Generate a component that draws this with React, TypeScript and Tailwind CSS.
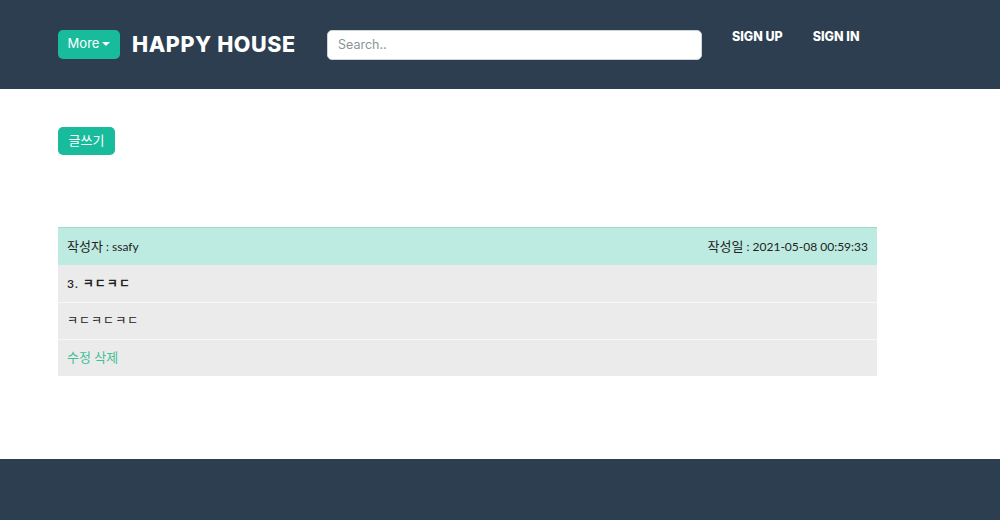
const KR = '"Lato", "Noto Sans CJK KR", sans-serif'
const HEAD = '"Inter", "Noto Sans", sans-serif'

const Header = () => {
  return (
    <header className="h-[89px] bg-[#2c3e50] flex items-center px-[58px]" style={{ fontFamily: HEAD }}>
      <button
        type="button"
        className="h-[29px] w-[62px] rounded-[5px] bg-[#18bc9c] text-white text-[13px] flex items-center justify-center gap-[3px] -mt-[1px]"
      >
        More
        <span className="w-0 h-0 border-l-[4px] border-r-[4px] border-t-[4px] border-l-transparent border-r-transparent border-t-white" />
      </button>
      <h1 className="ml-[12px] text-white text-[21.5px] font-extrabold tracking-[0.6px] w-[183px]">HAPPY HOUSE</h1>
      <input
        className="ml-[12px] w-[375px] h-[30px] rounded-[5px] bg-white border border-[#ced4da] px-[10px] text-[12.5px] outline-none placeholder:text-[#8a9596]"
        placeholder="Search.."
      />
      <nav className="flex gap-[30px] ml-[30px] -mt-[15px] text-white text-[12.5px] font-extrabold">
        <a>SIGN UP</a>
        <a>SIGN IN</a>
      </nav>
    </header>
  )
}

const Board = () => {
  return (
    <main className="h-[370px] px-[58px] pt-[38px]" style={{ fontFamily: KR }}>
      <button type="button" className="h-[28px] w-[57px] rounded-[5px] bg-[#18bc9c] text-white text-[13px]">
        글쓰기
      </button>
      <div className="mt-[72px] w-[819px] text-[12px] text-[#222]">
        <div className="h-[38px] bg-[#bdebe1] border-t border-[#9fd8cb] flex items-center justify-between px-[9px]">
          <span>
            <span className="text-[13px]">작성자</span> : ssafy
          </span>
          <span>
            <span className="text-[13px]">작성일</span> : 2021-05-08 00:59:33
          </span>
        </div>
        <div className="h-[37px] bg-[#ebebeb] flex items-center px-[9px] font-semibold tracking-[1px]">3. ㅋㄷㅋㄷ</div>
        <div className="h-[37px] bg-[#ebebeb] border-t border-[#f7f7f7] flex items-center px-[9px] tracking-[1px]">ㅋㄷㅋㄷㅋㄷ</div>
        <div className="h-[37px] bg-[#ebebeb] border-t border-[#f7f7f7] flex items-center px-[9px] text-[#3fbf98] text-[13px]">
          수정 삭제
        </div>
      </div>
    </main>
  )
}

export default function App() {
  return (
    <div className="w-[1000px] h-[520px] bg-white overflow-hidden">
      <Header />
      <Board />
      <footer className="h-[61px] bg-[#2c3e50]" />
    </div>
  )
}
